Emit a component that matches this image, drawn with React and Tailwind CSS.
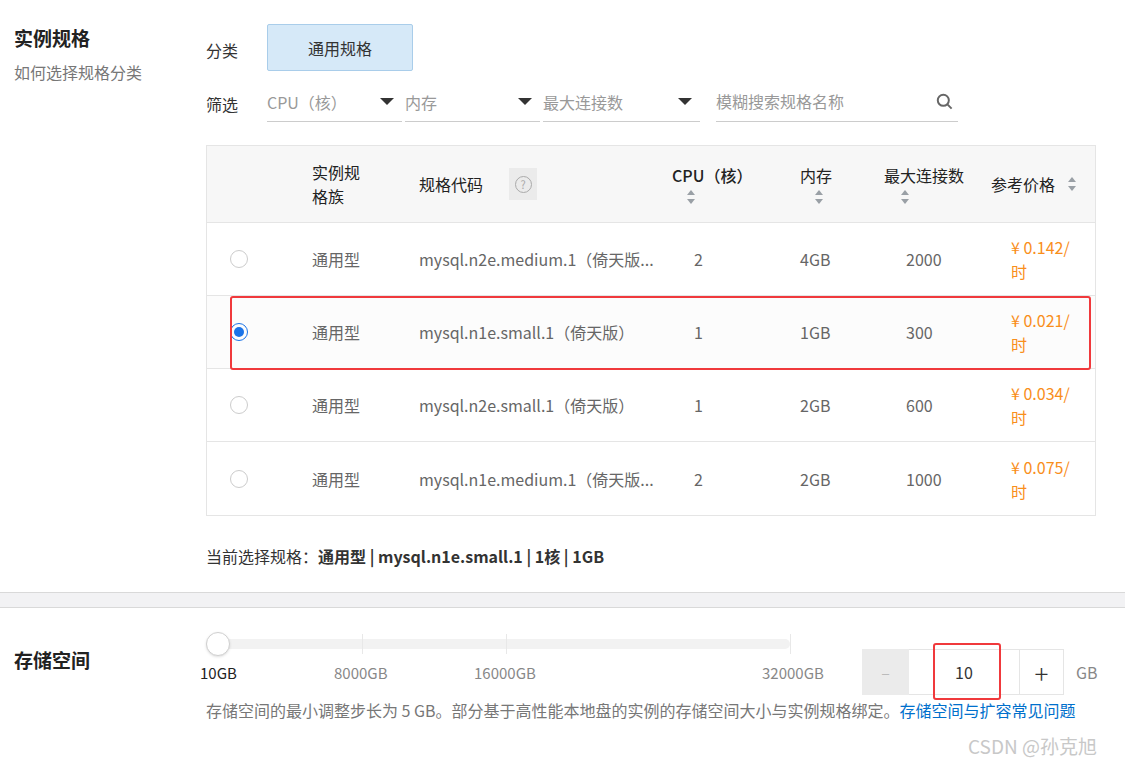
import React from "react";

const rows = [
  { code: "mysql.n2e.medium.1（倚天版...", cpu: "2", mem: "4GB", conn: "2000", price: "¥ 0.142/" },
  { code: "mysql.n1e.small.1（倚天版）", cpu: "1", mem: "1GB", conn: "300", price: "¥ 0.021/", sel: true },
  { code: "mysql.n2e.small.1（倚天版）", cpu: "1", mem: "2GB", conn: "600", price: "¥ 0.034/" },
  { code: "mysql.n1e.medium.1（倚天版...", cpu: "2", mem: "2GB", conn: "1000", price: "¥ 0.075/" },
];

const cols = "grid grid-cols-[105px_107px_253px_128px_84px_107px_1fr]";

function Sort() {
  return (
    <svg width="10" height="16" viewBox="0 0 10 16" className="fill-[#9aa0a6]">
      <path d="M5 1 L9 6 H1 Z" />
      <path d="M5 15 L9 10 H1 Z" />
    </svg>
  );
}

function Caret() {
  return (
    <svg width="14" height="8" viewBox="0 0 14 8" className="fill-[#333]">
      <path d="M0 0 H14 L7 7 Z" />
    </svg>
  );
}

export default function App() {
  return (
    <div className="w-[1125px] h-[768px] bg-white overflow-hidden relative text-[#333]" style={{ fontFamily: '"Noto Sans CJK SC", "Noto Sans", sans-serif' }}>
      <div className="flex h-[592px]">
        <div className="w-[206px] pl-[14px] pt-[24px]">
          <div className="text-[19px] font-bold leading-[28px] text-[#222]">实例规格</div>
          <div className="text-[16px] text-[#777] mt-[8px]">如何选择规格分类</div>
        </div>
        <div className="flex-1 pt-[24px]">
          <div className="flex items-center">
            <span className="text-[16px] w-[61px] mt-[4px]">分类</span>
            <div className="w-[146px] h-[47px] bg-[#d6e9f8] border border-[#a9cdea] rounded-[2px] flex items-center justify-center text-[16px] text-[#333]">通用规格</div>
          </div>
          <div className="flex items-end mt-[10px]">
            <span className="text-[16px] w-[61px] pb-[6px]">筛选</span>
            <div className="flex gap-[3px]">
              {[["CPU（核）", "w-[135px]"], ["内存", "w-[135px]"], ["最大连接数", "w-[157px]"]].map(([t, w]) => (
                <div key={t} className={`${w} h-[40px] border-b border-[#ccc] flex items-center justify-between pr-[8px] text-[16px] text-[#999]`}>
                  <span>{t}</span>
                  <Caret />
                </div>
              ))}
            </div>
            <div className="w-[242px] h-[41px] ml-[16px] border-b border-[#ccc] flex items-center justify-between pr-[4px] text-[16px] text-[#999]">
              <span>模糊搜索规格名称</span>
              <svg width="19" height="19" viewBox="0 0 24 24" fill="none" stroke="#666" strokeWidth="2.5"><circle cx="10.5" cy="10.5" r="7" /><path d="M16 16l5 5" /></svg>
            </div>
          </div>

          <div className="mt-[23px] w-[890px] border border-[#e5e5e5]">
            <div className={`${cols} h-[77px] bg-[#f7f7f7] border-b border-[#e5e5e5] items-center text-[16px] text-[#222]`}>
              <div />
              <div className="leading-[24px]">实例规<br />格族</div>
              <div className="flex items-center gap-[26px]">
                <span>规格代码</span>
                <span className="w-[28px] h-[32px] bg-[#ebebeb] flex items-center justify-center">
                  <span className="w-[17px] h-[17px] rounded-full border border-[#aaa] text-[11px] text-[#aaa] flex items-center justify-center leading-none">?</span>
                </span>
              </div>
              <div className="flex flex-col items-start">
                <span className="font-medium">CPU（核）</span>
                <span className="ml-[14px] mt-[2px]"><Sort /></span>
              </div>
              <div className="flex flex-col items-start">
                <span>内存</span>
                <span className="ml-[14px] mt-[2px]"><Sort /></span>
              </div>
              <div className="flex flex-col items-start">
                <span>最大连接数</span>
                <span className="ml-[16px] mt-[2px]"><Sort /></span>
              </div>
              <div className="flex items-center gap-[12px]">
                <span>参考价格</span>
                <Sort />
              </div>
            </div>
            {rows.map((r, i) => (
              <div key={i} className={`${cols} h-[73px] items-center text-[16px] text-[#666] relative ${i < 3 ? "border-b border-[#e5e5e5]" : ""} ${r.sel ? "bg-[#fcfcfc]" : ""}`}>
                {r.sel && <div className="absolute left-[23px] right-[4px] top-[0px] bottom-[-2px] border-2 border-[#f0393c] rounded-[3px]" />}
                <div className="pl-[23px]">
                  {r.sel ? (
                    <span className="w-[18px] h-[18px] rounded-full border border-[#1a73e8] flex items-center justify-center"><span className="w-[10px] h-[10px] rounded-full bg-[#1a73e8]" /></span>
                  ) : (
                    <span className="block w-[18px] h-[18px] rounded-full border border-[#ccc]" />
                  )}
                </div>
                <div>通用型</div>
                <div className="whitespace-nowrap overflow-hidden">{r.code}</div>
                <div className="pl-[22px]">{r.cpu}</div>
                <div>{r.mem}</div>
                <div className="pl-[22px]">{r.conn}</div>
                <div className="pl-[20px] text-[#f98e1b] leading-[24px]">{r.price}<br />时</div>
              </div>
            ))}
          </div>

          <div className="mt-[28px] text-[16px] text-[#333]">
            当前选择规格：<b>通用型 | mysql.n1e.small.1 | 1核 | 1GB</b>
          </div>
        </div>
      </div>
      <div className="h-[16px] bg-[#f2f2f4] border-y border-[#d9d9d9]" />
      <div className="flex">
        <div className="w-[206px] pl-[14px] pt-[38px] text-[19px] font-bold text-[#222]">存储空间</div>
        <div className="flex-1 pt-[24px]">
          <div className="flex">
            <div className="w-[620px]">
              <div className="relative w-[584px] h-[24px] flex items-center">
                <div className="w-full h-[10px] bg-[#f2f2f2] rounded-full" />
                <div className="absolute left-[156px] top-[2px] w-px h-[20px] bg-[#e8e8e8]" />
                <div className="absolute left-[300px] top-[2px] w-px h-[20px] bg-[#e8e8e8]" />
                <div className="absolute left-[584px] top-[2px] w-px h-[20px] bg-[#e8e8e8]" />
                <div className="absolute left-0 top-0 w-[24px] h-[24px] rounded-full bg-white border border-[#d0d0d0] shadow-sm" />
              </div>
              <div className="relative h-[24px] mt-[6px] text-[15px] text-[#888]">
                <span className="absolute left-[-6px] text-[#222]">10GB</span>
                <span className="absolute left-[128px]">8000GB</span>
                <span className="absolute left-[268px]">16000GB</span>
                <span className="absolute left-[556px]">32000GB</span>
              </div>
            </div>
            <div className="ml-[36px] mt-[17px] flex items-center">
              <div className="w-[47px] h-[46px] bg-[#ebebeb] flex items-center justify-center text-[#bbb]">–</div>
              <div className="relative w-[110px] h-[46px] border-y border-[#e5e5e5] flex items-center justify-center text-[16px]">
                10
                <div className="absolute left-[24px] top-[-7px] w-[68px] h-[57px] border-2 border-[#f0393c] rounded-[3px]" />
              </div>
              <div className="w-[45px] h-[46px] border border-[#e5e5e5] flex items-center justify-center text-[26px] font-light text-[#333]">+</div>
              <span className="ml-[12px] text-[16px] text-[#888]">GB</span>
            </div>
          </div>
          <div className="mt-[2px] w-[890px] text-[16px] text-[#777] leading-[26px]">
            存储空间的最小调整步长为 5 GB。部分基于高性能本地盘的实例的存储空间大小与实例规格绑定。<span className="text-[#0070cc]">存储空间与扩容常见问题</span>
          </div>
        </div>
      </div>
      <div className="absolute right-[28px] bottom-[8px] text-[19px] text-[#c8c8c8]">CSDN @孙克旭</div>
    </div>
  );
}
